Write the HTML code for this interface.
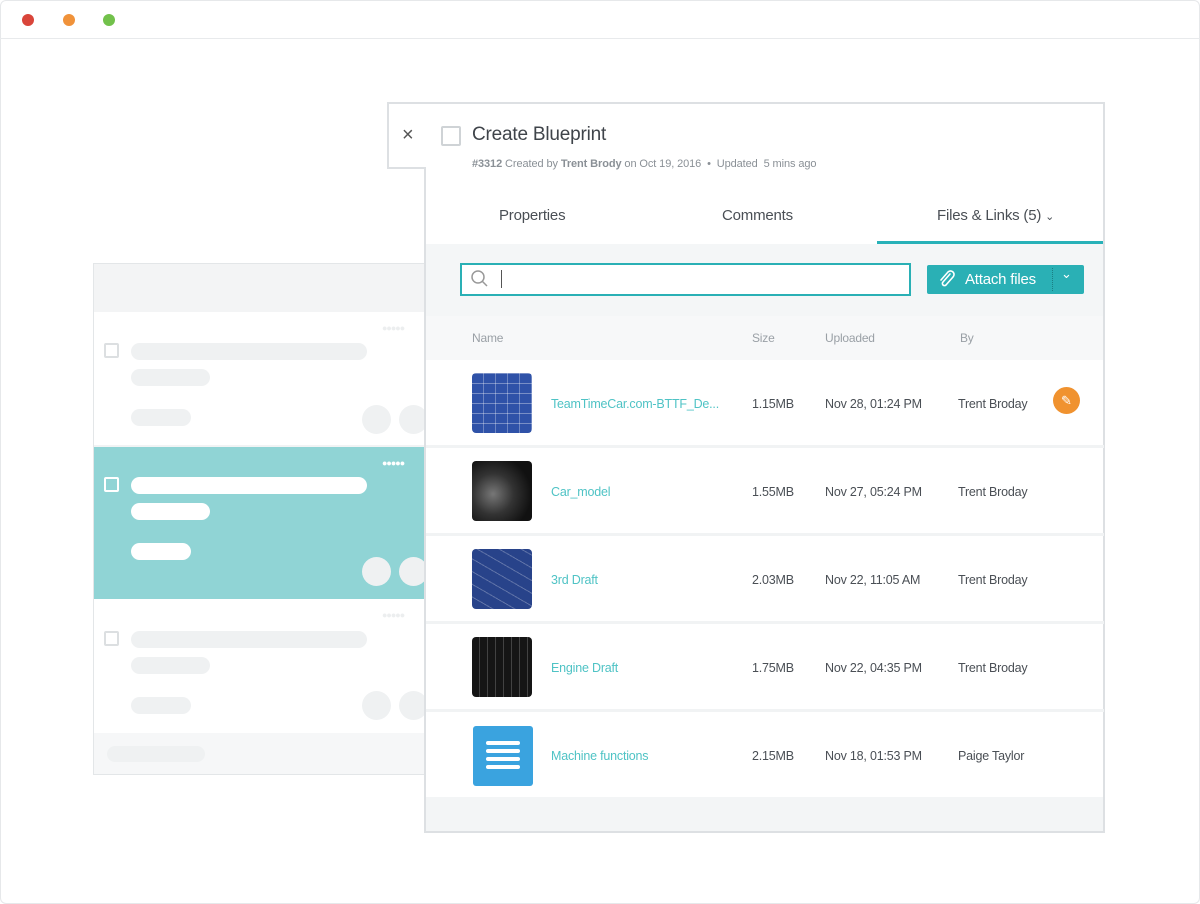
<!DOCTYPE html>
<html><head><meta charset="utf-8"><style>
*{margin:0;padding:0;box-sizing:border-box}
body{width:1200px;height:904px;background:#fff;font-family:"Liberation Sans",sans-serif;position:relative;overflow:hidden}
.a{position:absolute}
.dot{position:absolute;width:12px;height:12px;border-radius:50%;top:14px}
.pill{position:absolute;border-radius:10px;background:#eff1f2}
.w{background:#fff}
.circ{position:absolute;width:29px;height:29px;border-radius:50%;background:#eff1f2}
.cb{position:absolute;width:15px;height:15px;border:2px solid #dcdfe1;border-radius:2px}
.t{position:absolute;font-size:12.5px;color:#4a4f55;letter-spacing:-0.2px}
.lk{color:#4fc3c5}
.th{position:absolute;left:472px;width:60px;height:60px;border-radius:4px;overflow:hidden}
.sep{position:absolute;left:426px;width:678px;height:3px;background:#f1f3f4}
</style></head><body>
<div class="a" style="left:0;top:0;width:1200px;height:904px;border:1px solid #e6e8ea;border-radius:6px"></div>
<div class="dot" style="left:22px;background:#d9453a"></div>
<div class="dot" style="left:63px;background:#f0923a"></div>
<div class="dot" style="left:103px;background:#72c14b"></div>
<div class="a" style="left:0;top:38px;width:1200px;height:1px;background:#e8eaec"></div>

<!-- left panel -->
<div class="a" style="left:93px;top:263px;width:334px;height:512px;border:1px solid #e3e6e8;background:#fff"></div>
<div class="a" style="left:94px;top:264px;width:332px;height:48px;background:#f3f4f5"></div>
<div class="a" style="left:94px;top:445px;width:332px;height:2px;background:#f1f3f4"></div>
<div class="a" style="left:94px;top:447px;width:332px;height:152px;background:#90d4d5"></div>
<div class="a" style="left:94px;top:733px;width:332px;height:41px;background:#f6f7f8"></div>
<div class="pill" style="left:107px;top:746px;width:98px;height:16px"></div>
<div class="cb" style="left:104px;top:343px"></div>
<div class="pill" style="left:131px;top:343px;width:236px;height:17px"></div>
<div class="pill" style="left:131px;top:369px;width:79px;height:17px"></div>
<div class="pill" style="left:131px;top:409px;width:60px;height:17px"></div>
<div class="circ" style="left:362px;top:405px"></div><div class="circ" style="left:399px;top:405px"></div>
<div class="cb" style="left:104px;top:477px;border-color:#fff"></div>
<div class="pill w" style="left:131px;top:477px;width:236px;height:17px"></div>
<div class="pill w" style="left:131px;top:503px;width:79px;height:17px"></div>
<div class="pill w" style="left:131px;top:543px;width:60px;height:17px"></div>
<div class="circ w" style="left:362px;top:557px"></div><div class="circ w" style="left:399px;top:557px"></div>
<div class="a" style="left:382px;top:458px;color:#fff;font-size:9px;letter-spacing:-1px">●●●●●</div>
<div class="a" style="left:382px;top:323px;color:#eceeef;font-size:9px;letter-spacing:-1px">●●●●●</div>
<div class="a" style="left:382px;top:610px;color:#eceeef;font-size:9px;letter-spacing:-1px">●●●●●</div>
<div class="cb" style="left:104px;top:631px"></div>
<div class="pill" style="left:131px;top:631px;width:236px;height:17px"></div>
<div class="pill" style="left:131px;top:657px;width:79px;height:17px"></div>
<div class="pill" style="left:131px;top:697px;width:60px;height:17px"></div>
<div class="circ" style="left:362px;top:691px"></div><div class="circ" style="left:399px;top:691px"></div>

<!-- modal -->
<div class="a" style="left:387px;top:102px;width:718px;height:67px;border:2px solid #dde0e3;background:#fff"></div>
<div class="a" style="left:424px;top:167px;width:681px;height:666px;border:2px solid #dde0e3;border-top:none;background:#fff"></div>
<div class="a" style="left:426px;top:160px;width:677px;height:20px;background:#fff"></div>
<div class="a" style="left:402px;top:124px;font-size:20px;color:#555">×</div>
<div class="cb" style="left:441px;top:126px;width:20px;height:20px;border-color:#cfd3d6"></div>
<div class="a" style="left:472px;top:124px;font-size:19px;color:#3f444a;letter-spacing:-0.2px">Create Blueprint</div>
<div class="a" style="left:472px;top:158px;font-size:11px;color:#8a9096;letter-spacing:-0.1px"><b>#3312</b> Created by <b>Trent Brody</b> on Oct 19, 2016 &nbsp;•&nbsp; Updated &nbsp;5 mins ago</div>
<div class="t" style="left:499px;top:207px;font-size:15px">Properties</div>
<div class="t" style="left:722px;top:207px;font-size:15px">Comments</div>
<div class="t" style="left:937px;top:207px;font-size:15px">Files &amp; Links (5) <span style="font-size:11px">⌄</span></div>
<div class="a" style="left:877px;top:241px;width:226px;height:3px;background:#27b1b8"></div>
<div class="a" style="left:426px;top:244px;width:677px;height:72px;background:#f4f6f7"></div>
<div class="a" style="left:460px;top:263px;width:451px;height:33px;border:2px solid #2ab0b5;background:#fff"></div>
<svg class="a" style="left:470px;top:269px" width="20" height="20"><circle cx="8" cy="8" r="6" fill="none" stroke="#999" stroke-width="1.5"/><line x1="12" y1="12" x2="17" y2="17" stroke="#999" stroke-width="1.5"/></svg>
<div class="a" style="left:501px;top:270px;width:1px;height:18px;background:#555"></div>
<div class="a" style="left:927px;top:265px;width:157px;height:29px;background:#2ab0b5;border-radius:2px"></div>
<svg class="a" style="left:937px;top:270px" width="20" height="20"><path d="M13 4 L6 12 A2 2 0 0 0 9 15 L16 7 A3.5 3.5 0 0 0 11 2 L4 10" fill="none" stroke="#fff" stroke-width="1.6" stroke-linecap="round"/></svg>
<div class="a" style="left:965px;top:271px;font-size:15px;color:#fff;letter-spacing:-0.2px">Attach files</div>
<div class="a" style="left:1052px;top:268px;height:23px;border-left:1px dotted #1b7f83"></div>
<div class="a" style="left:1061px;top:266px;font-size:13px;color:#fff">⌄</div>
<div class="a" style="left:426px;top:316px;width:677px;height:44px;background:#f7f8f9"></div>
<div class="t" style="left:472px;top:331px;font-size:12px;color:#9aa0a6">Name</div>
<div class="t" style="left:752px;top:331px;font-size:12px;color:#9aa0a6">Size</div>
<div class="t" style="left:825px;top:331px;font-size:12px;color:#9aa0a6">Uploaded</div>
<div class="t" style="left:960px;top:331px;font-size:12px;color:#9aa0a6">By</div>

<div class="sep" style="top:445px"></div><div class="sep" style="top:533px"></div><div class="sep" style="top:621px"></div><div class="sep" style="top:709px"></div>
<div class="a" style="left:426px;top:797px;width:677px;height:34px;background:#f3f5f6"></div>

<div class="th" style="top:373px;background:#2f52a8;background-image:repeating-linear-gradient(0deg,transparent 0 9px,rgba(255,255,255,.35) 9px 10px),repeating-linear-gradient(90deg,transparent 0 11px,rgba(255,255,255,.3) 11px 12px)"></div>
<div class="th" style="top:461px;background:radial-gradient(circle at 35% 55%,#777 0,#333 40%,#111 75%),#222"></div>
<div class="th" style="top:549px;background:#28438a;background-image:repeating-linear-gradient(30deg,transparent 0 10px,rgba(255,255,255,.25) 10px 11px)"></div>
<div class="th" style="top:637px;background:#151515;background-image:repeating-linear-gradient(90deg,transparent 0 7px,rgba(200,200,200,.25) 7px 8px)"></div>
<div class="a" style="left:473px;top:726px;width:60px;height:60px;background:#3aa3df;border-radius:3px"></div>
<div class="a" style="left:486px;top:741px;width:34px;height:4px;background:#fff;border-radius:2px;box-shadow:0 8px #fff,0 16px #fff,0 24px #fff"></div>

<div class="t lk" style="left:551px;top:397px">TeamTimeCar.com-BTTF_De...</div>
<div class="t" style="left:752px;top:397px">1.15MB</div><div class="t" style="left:825px;top:397px">Nov 28, 01:24 PM</div><div class="t" style="left:958px;top:397px">Trent Broday</div>
<div class="a" style="left:1053px;top:387px;width:27px;height:27px;border-radius:50%;background:#f0922f;color:#fff;font-size:13px;text-align:center;line-height:27px">✎</div>
<div class="t lk" style="left:551px;top:485px">Car_model</div>
<div class="t" style="left:752px;top:485px">1.55MB</div><div class="t" style="left:825px;top:485px">Nov 27, 05:24 PM</div><div class="t" style="left:958px;top:485px">Trent Broday</div>
<div class="t lk" style="left:551px;top:573px">3rd Draft</div>
<div class="t" style="left:752px;top:573px">2.03MB</div><div class="t" style="left:825px;top:573px">Nov 22, 11:05 AM</div><div class="t" style="left:958px;top:573px">Trent Broday</div>
<div class="t lk" style="left:551px;top:661px">Engine Draft</div>
<div class="t" style="left:752px;top:661px">1.75MB</div><div class="t" style="left:825px;top:661px">Nov 22, 04:35 PM</div><div class="t" style="left:958px;top:661px">Trent Broday</div>
<div class="t lk" style="left:551px;top:749px">Machine functions</div>
<div class="t" style="left:752px;top:749px">2.15MB</div><div class="t" style="left:825px;top:749px">Nov 18, 01:53 PM</div><div class="t" style="left:958px;top:749px">Paige Taylor</div>
</body></html>
